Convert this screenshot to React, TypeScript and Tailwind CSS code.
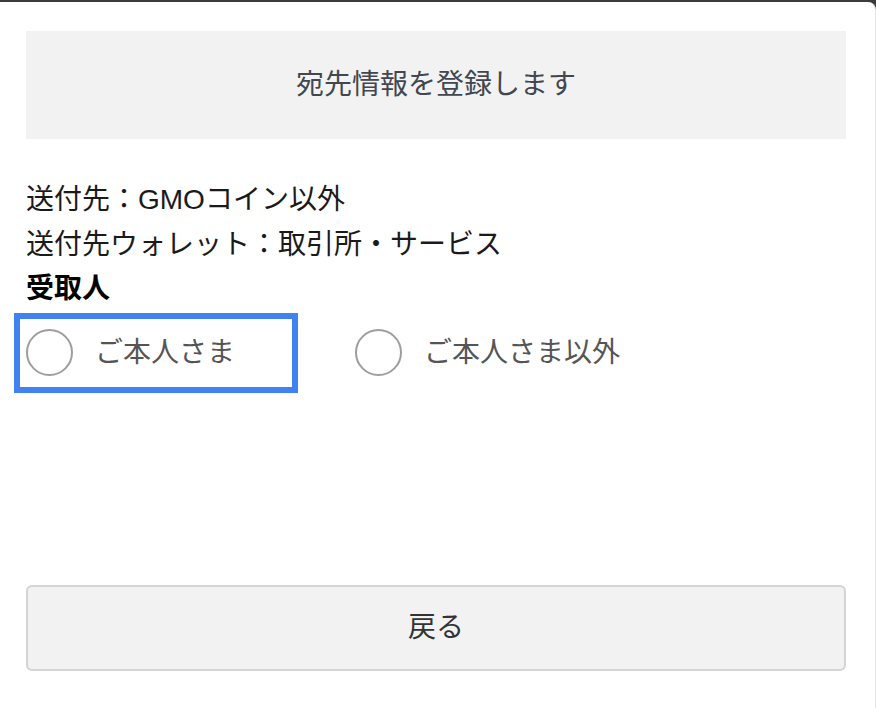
import React, { useState } from 'react';

const font = { fontFamily: '"Liberation Sans", "Noto Sans CJK JP", sans-serif' };

const options = [
    { value: 'self', label: 'ご本人さま' },
    { value: 'other', label: 'ご本人さま以外' },
];

export default function App() {
    const [selected, setSelected] = useState<string | null>(null);

    return (
        <div className="h-[708px] w-[876px] bg-[#3c3c3c] pt-[2px] overflow-hidden" style={font}>
            <div className="h-full bg-white rounded-tr-[8px] border-r border-[#e6e6e6] pl-[26px] pr-[29px] pt-[29px] flex flex-col">
                <div className="h-[108px] bg-[#f2f2f2] flex items-center justify-center text-[28px] text-[#41464f]">
                    宛先情報を登録します
                </div>

                <div className="mt-[39px] text-[28px] leading-[44.5px] text-[#1a1a1a]">
                    <p>送付先：GMOコイン以外</p>
                    <p>送付先ウォレット：取引所・サービス</p>
                    <p className="font-bold text-black">受取人</p>
                </div>

                <div className="flex items-center -ml-[12px] mt-[1px]">
                    {options.map((option, index) => (
                        <button
                            key={option.value}
                            onClick={() => setSelected(option.value)}
                            className={`flex items-center h-[80px] pl-[6px] pr-[6px] border-[6px] ${index === 0
                                ? 'w-[284px] border-[#3f82f0]'
                                : 'ml-[45px] border-transparent'
                                }`}
                        >
                            <span className="w-[47px] h-[47px] rounded-full border-2 border-[#9e9e9e] flex items-center justify-center shrink-0">
                                {selected === option.value && <span className="w-[25px] h-[25px] rounded-full bg-[#3f82f0]" />}
                            </span>
                            <span className="ml-[22px] text-[28px] text-[#555555] whitespace-nowrap">{option.label}</span>
                        </button>
                    ))}
                </div>

                <button className="mt-[192px] h-[86px] w-full bg-[#f2f2f2] border-2 border-[#d4d4d4] rounded-[6px] text-[28px] text-[#333333]">
                    戻る
                </button>
            </div>
        </div>
    );
}
